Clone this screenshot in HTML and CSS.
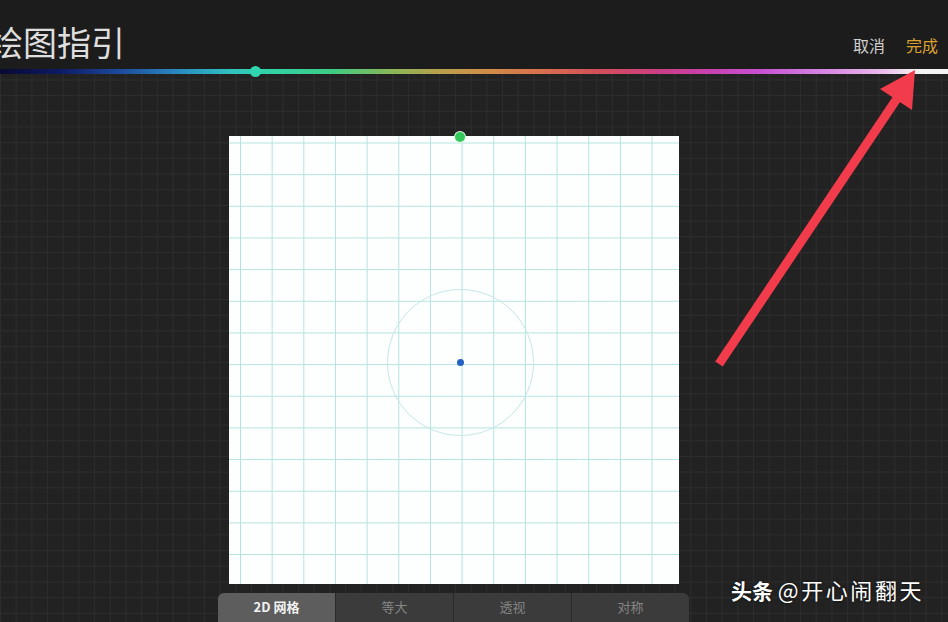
FILE: index.html
```html
<!DOCTYPE html>
<html lang="zh">
<head>
<meta charset="utf-8">
<link rel="stylesheet" href="styles.css">
</head>
<body>
<div class="page">
  <header class="header">
    <h1 class="title">绘图指引</h1>
    <div class="actions">
      <span class="cancel">取消</span>
      <span class="done">完成</span>
    </div>
  </header>
  <div class="hue-bar"><span class="hue-knob"></span></div>
  <main class="stage">
    <div class="canvas">
      <span class="circle"></span>
      <span class="dot-top"></span>
      <span class="dot-center"></span>
    </div>
  </main>
  <nav class="tabs">
    <div class="tab active">2D 网格</div>
    <div class="tab">等大</div>
    <div class="tab">透视</div>
    <div class="tab">对称</div>
  </nav>
  <div class="watermark"><b>头条</b> <span class="handle">@开心闹翻天</span></div>
  <svg class="arrow" width="948" height="622" viewBox="0 0 948 622">
    <line x1="719" y1="364" x2="898" y2="97" stroke="#f23b4b" stroke-width="9" stroke-linecap="butt"/>
    <polygon points="915,70 880,89 912,110" fill="#f23b4b"/>
  </svg>
</div>
</body>
</html>
```
FILE: styles.css
```css
* { box-sizing: border-box; }
html, body { margin: 0; padding: 0; }
body {
  width: 948px;
  height: 622px;
  overflow: hidden;
  font-family: "Noto Sans CJK SC", "Noto Sans", sans-serif;
  background-color: #222222;
  background-image:
    linear-gradient(to right, #2d2d2d 1px, transparent 1px),
    linear-gradient(to bottom, #2d2d2d 1px, transparent 1px);
  background-size: 15.7px 15.7px;
  background-position: 0 1px;
}
.page {
  position: relative;
  width: 948px;
  height: 622px;
}
.header {
  height: 69px;
  background: #1c1c1c;
  display: flex;
  justify-content: space-between;
  align-items: flex-start;
}
.title {
  margin: 18px 0 0 -11px;
  font-size: 34px;
  font-weight: 400;
  color: #dedede;
  letter-spacing: 0;
  line-height: 48px;
}
.actions {
  display: flex;
  gap: 21px;
  margin: 33px 10px 0 0;
  font-size: 16px;
  line-height: 24px;
}
.cancel { color: #cfcfcf; }
.done { color: #d9a031; }
.hue-bar {
  position: relative;
  height: 5px;
  background: linear-gradient(to right,
    #080a30 0px, #0e1a66 60px, #1d4a9c 120px, #2a8cc0 180px, #30c0c0 230px,
    #30d2aa 260px, #3ccc86 330px, #88b858 390px, #b8a04c 440px, #d28c48 490px,
    #d8704e 540px, #d24e5a 600px, #cc3e86 660px, #c842b0 710px, #c850d2 760px,
    #d482e2 820px, #e8b2ea 875px, #f0e0f0 905px, #f4f4f4 920px, #f4f4f4 948px);
}
.hue-knob {
  position: absolute;
  left: 250px;
  top: -3px;
  width: 11px;
  height: 11px;
  border-radius: 50%;
  background: #2fd6ae;
}
.stage {
  padding: 62px 0 0 229px;
  height: 519px;
}
.canvas {
  position: relative;
  width: 450px;
  height: 448px;
  background-color: #fdfffe;
  background-image:
    linear-gradient(to right, #b4e4e0 1px, transparent 1px),
    linear-gradient(to bottom, #b4e4e0 1px, transparent 1px);
  background-size: 31.67px 31.67px;
  background-position: 11px 6.5px;
}
.circle {
  position: absolute;
  left: 158px;
  top: 153px;
  width: 147px;
  height: 147px;
  border-radius: 50%;
  border: 1.5px solid #c6e6e8;
}
.dot-top {
  position: absolute;
  left: 226px;
  top: -4px;
  width: 10px;
  height: 10px;
  border-radius: 50%;
  background: #34c85a;
  box-shadow: 0 0 0 1px #e8fbe8;
}
.dot-center {
  position: absolute;
  left: 228px;
  top: 223px;
  width: 7px;
  height: 7px;
  border-radius: 50%;
  background: #2262c4;
}
.tabs {
  position: absolute;
  left: 218px;
  top: 593px;
  width: 471px;
  height: 34px;
  display: flex;
  border-radius: 6px 6px 0 0;
  overflow: hidden;
  background: #2a2a2a;
  gap: 1px;
}
.tab {
  flex: 1;
  background: #3b3b3b;
  color: #858585;
  font-size: 13px;
  text-align: center;
  line-height: 28px;
}
.tab.active {
  background: #5d5d5d;
  color: #f2f2f2;
  font-weight: 700;
}
.watermark {
  position: absolute;
  left: 731px;
  top: 574px;
  font-size: 21px;
  line-height: 30px;
  color: #ffffff;
  white-space: nowrap;
  text-shadow: 0 0 3px rgba(0,0,0,0.8);
}
.watermark b { font-weight: 700; }
.handle {
  font-size: 22px;
  letter-spacing: 2.6px;
}
.arrow {
  position: absolute;
  left: 0;
  top: 0;
  pointer-events: none;
}
```
